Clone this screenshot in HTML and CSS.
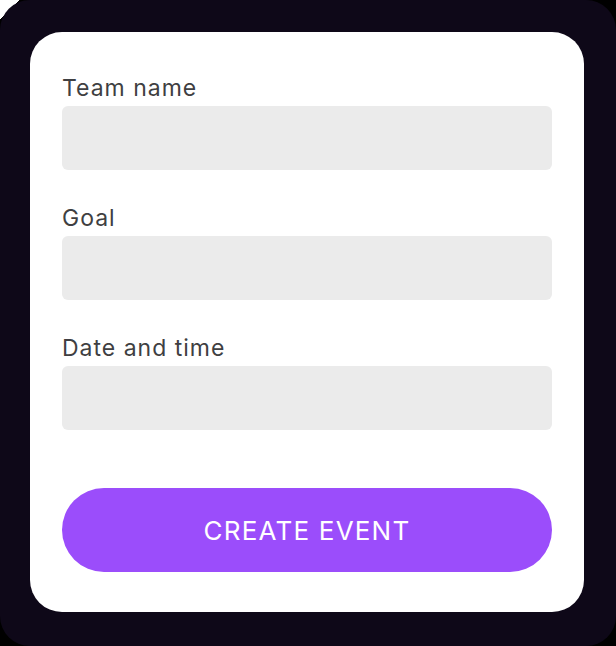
FILE: index.html
```html
<!DOCTYPE html>
<html>
<head>
    <meta charset="UTF-8">
    <title>Create Event</title>
    <link rel="stylesheet" href="styles.css">
</head>
<body>
    <div class="frame">
        <form class="card">
            <div class="field">
                <label class="field-label" for="teamName">Team name</label>
                <input class="field-input" id="teamName" type="text">
            </div>
            <div class="field">
                <label class="field-label" for="goal">Goal</label>
                <input class="field-input" id="goal" type="text">
            </div>
            <div class="field">
                <label class="field-label" for="dateTime">Date and time</label>
                <input class="field-input" id="dateTime" type="text">
            </div>
            <button class="btn-create" type="button">CREATE EVENT</button>
        </form>
    </div>
</body>
</html>
```

FILE: styles.css
```css
html, body {
    width: 616px;
    height: 646px;
}

body {
    margin: 0;
    padding: 0;
    font-family: "Inter", "Noto Sans", sans-serif;
    background: linear-gradient(135deg, #fff 0, #fff 14px, #000 14px);
    overflow: hidden;
}

.frame {
    width: 616px;
    height: 646px;
    box-sizing: border-box;
    padding: 32px 32px 34px 30px;
    background: #0e0818;
    border-radius: 30px;
}

.card {
    display: flex;
    flex-direction: column;
    gap: 32px;
    height: 100%;
    box-sizing: border-box;
    padding: 40px 32px;
    background: #fff;
    border-radius: 32px;
}

.field {
    display: flex;
    flex-direction: column;
    gap: 4px;
}

.field-label {
    padding-top: 2px;
    font-size: 23px;
    line-height: 28px;
    letter-spacing: 1px;
    color: #3f3f42;
}

.field-input {
    height: 64px;
    margin: 0;
    padding: 0 16px;
    border: none;
    border-radius: 6px;
    background: #ebebeb;
    font: inherit;
    outline: none;
}

.btn-create {
    height: 84px;
    margin-top: 26px;
    border: none;
    border-radius: 42px;
    background: #9b4dfb;
    color: #fff;
    font-family: inherit;
    font-size: 26px;
    letter-spacing: 1.2px;
    cursor: pointer;
}
```
